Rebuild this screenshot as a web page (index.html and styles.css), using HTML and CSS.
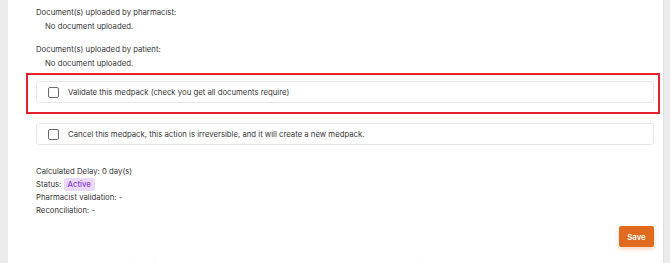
FILE: index.html
```html
<!DOCTYPE html>
<html lang="en">
<head>
  <meta charset="UTF-8" />
  <title>Medpack</title>
  <link rel="stylesheet" href="styles.css">
</head>
<body>
  <div class="layout">
    <div class="side side-left"></div>
    <div class="panel">
      <div class="docs">
        <div class="doc-label">Document(s) uploaded by pharmacist:</div>
        <div class="doc-value">No document uploaded.</div>
      </div>
      <div class="docs">
        <div class="doc-label">Document(s) uploaded by patient:</div>
        <div class="doc-value">No document uploaded.</div>
      </div>

      <div class="highlight">
        <label class="check-card">
          <span class="box"></span>
          <span>Validate this medpack (check you get all documents require)</span>
        </label>
      </div>

      <label class="check-card cancel">
        <span class="box"></span>
        <span>Cancel this medpack, this action is irreversible, and it will create a new medpack.</span>
      </label>

      <div class="info">
        <div>Calculated Delay: 0 day(s)</div>
        <div>Status: <span class="badge">Active</span></div>
        <div>Pharmacist validation: -</div>
        <div>Reconciliation: -</div>
      </div>

      <div class="actions">
        <button class="save-btn">Save</button>
      </div>

      <div class="footer-text">Medpack created automatically from the patient request and last updated on 12/03/2024 by the pharmacist</div>
    </div>
    <div class="side side-right"></div>
  </div>
</body>
</html>
```

FILE: styles.css
```css
body {
  margin: 0;
  font-family: "Inter", "Noto Sans", sans-serif;
  font-size: 7.75px;
  color: #363636;
  background: #fff;
  overflow: hidden;
}
.layout {
  display: flex;
  height: 263px;
  overflow: hidden;
}
.side {
  background: #ebebeb;
}
.side-left {
  width: 8px;
}
.side-right {
  width: 7px;
  border-left: 1px solid #e0e0e0;
  box-sizing: border-box;
}
.panel {
  flex: 1;
  padding: 6px 9px 0 28px;
  background: #fff;
}
.docs {
  margin-bottom: 10px;
  line-height: 13.5px;
}
.doc-value {
  padding-left: 9px;
}
.highlight {
  border: 2px solid #e5202b;
  margin: -7px -6px 0 -10px;
  padding: 6px 4px 9px 8px;
}
.check-card {
  display: flex;
  align-items: center;
  gap: 9px;
  height: 22px;
  padding-left: 11px;
  border: 1px solid #e6e6e6;
  border-radius: 3px;
  box-sizing: border-box;
}
.box {
  width: 9px;
  height: 9px;
  border: 1px solid #6b6b6b;
  border-radius: 2px;
  background: #fff;
}
.cancel {
  margin-top: 9px;
}
.info {
  margin-top: 20px;
}
.info div {
  line-height: 13px;
}
.badge {
  display: inline-block;
  background: #ead9fc;
  color: #8a3fd6;
  font-weight: 500;
  padding: 0 4px;
  border-radius: 2px;
  line-height: 13px;
}
.actions {
  display: flex;
  justify-content: flex-end;
  margin-top: 9px;
}
.save-btn {
  background: #e06b1e;
  color: #fff;
  font-family: "Inter", sans-serif;
  font-weight: 600;
  font-size: 7.75px;
  border: none;
  border-radius: 2px;
  width: 35px;
  height: 21px;
  box-shadow: 0 2px 4px rgba(224, 107, 30, 0.3);
}
.footer-text {
  margin-top: 14px;
  color: #dcdcdc;
  white-space: nowrap;
}
```
